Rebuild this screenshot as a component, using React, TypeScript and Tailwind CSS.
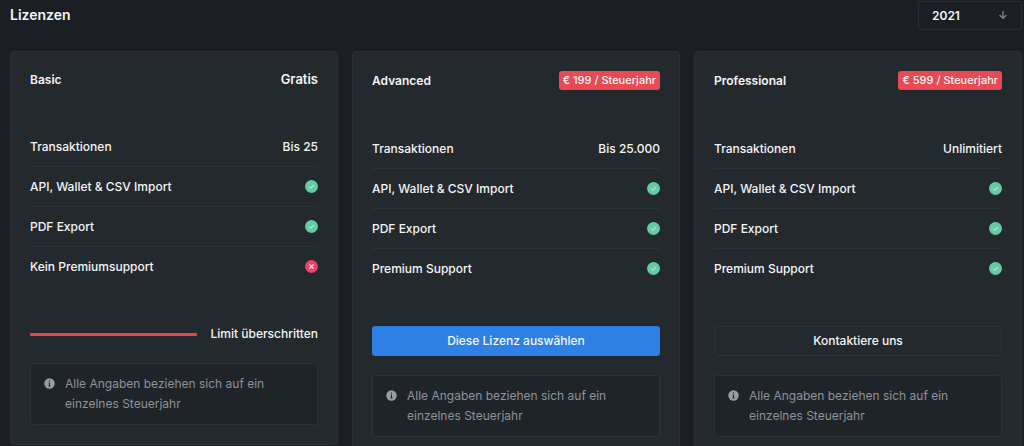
import React from "react";

type Feature = {
  label: string;
  value: string | boolean;
};

type License = {
  name: string;
  price: string;
  badge: boolean;
  action: "limit" | "select" | "contact";
  features: Feature[];
};

const licenses: License[] = [
  {
    name: "Basic",
    price: "Gratis",
    badge: false,
    action: "limit",
    features: [
      { label: "Transaktionen", value: "Bis 25" },
      { label: "API, Wallet & CSV Import", value: true },
      { label: "PDF Export", value: true },
      { label: "Kein Premiumsupport", value: false },
    ],
  },
  {
    name: "Advanced",
    price: "€ 199 / Steuerjahr",
    badge: true,
    action: "select",
    features: [
      { label: "Transaktionen", value: "Bis 25.000" },
      { label: "API, Wallet & CSV Import", value: true },
      { label: "PDF Export", value: true },
      { label: "Premium Support", value: true },
    ],
  },
  {
    name: "Professional",
    price: "€ 599 / Steuerjahr",
    badge: true,
    action: "contact",
    features: [
      { label: "Transaktionen", value: "Unlimitiert" },
      { label: "API, Wallet & CSV Import", value: true },
      { label: "PDF Export", value: true },
      { label: "Premium Support", value: true },
    ],
  },
];

const CheckIcon = () => (
  <svg viewBox="0 0 13 13" className="size-[13px]" role="img" aria-label="Enthalten">
    <circle cx="6.5" cy="6.5" r="6.5" fill="#63cba5" />
    <path d="M4.2 6.7l1.7 1.5 3-3.1" fill="none" stroke="#d5f3e7" strokeWidth="1" />
  </svg>
);

const CrossIcon = () => (
  <svg viewBox="0 0 13 13" className="size-[13px]" role="img" aria-label="Nicht enthalten">
    <circle cx="6.5" cy="6.5" r="6.5" fill="#e5446d" />
    <path d="M4.4 4.4l4.2 4.2M8.6 4.4L4.4 8.6" fill="none" stroke="#fbe3ea" strokeWidth="1.3" />
  </svg>
);

const InfoIcon = () => (
  <svg viewBox="0 0 11 11" className="mt-1 size-[11px] shrink-0" aria-hidden="true">
    <circle cx="5.5" cy="5.5" r="5.2" fill="#989da6" />
    <path d="M5.5 2.4v1.3M4.7 5h0.8v2.9M4.4 8h2.2" fill="none" stroke="#1f2428" strokeWidth="1" />
  </svg>
);

const ArrowDownIcon = () => (
  <svg
    viewBox="0 0 10 10"
    className="pointer-events-none absolute top-[9px] right-[14px] size-[10px]"
    fill="none"
    stroke="#7b8794"
    strokeWidth="1.3"
    aria-hidden="true"
  >
    <path d="M5 1v7.4M1.6 5L5 8.4 8.4 5" />
  </svg>
);

const LicenseAction = ({ action }: { action: License["action"] }) => {
  if (action === "limit") {
    return (
      <div className="flex items-center gap-[13px]">
        <div
          role="progressbar"
          aria-label="Transaktionslimit"
          aria-valuenow={100}
          className="h-[3px] flex-1 rounded-[1px] bg-[#e54850]"
        ></div>
        <span className="leading-5">Limit überschritten</span>
      </div>
    );
  }
  if (action === "select") {
    return (
      <button type="button" className="h-[30px] w-full rounded-[3px] bg-[#2f80e3]">
        Diese Lizenz auswählen
      </button>
    );
  }
  return (
    <button type="button" className="h-[30px] w-full rounded-[3px] border border-[#2d3236]">
      Kontaktiere uns
    </button>
  );
};

const LicenseCard = ({ license }: { license: License }) => {
  return (
    <section className="rounded-[4px] border border-[#2c3135] bg-[#24292d] p-[19px]">
      <div className="flex items-center justify-between">
        <h2 className="leading-[17px] font-semibold">{license.name}</h2>
        {license.badge ? (
          <span className="rounded-[3px] bg-[#e84a54] px-1 text-[11px] leading-[19px]">
            {license.price}
          </span>
        ) : (
          <span className="text-[13px] leading-[17px] font-semibold">{license.price}</span>
        )}
      </div>
      <ul className="mt-[39px] mb-[38px] divide-y divide-[#2d3236]">
        {license.features.map((feature) => (
          <li key={feature.label} className="flex items-center justify-between py-[10px] leading-[19px]">
            <span>{feature.label}</span>
            {typeof feature.value === "string" ? (
              <span>{feature.value}</span>
            ) : feature.value ? (
              <CheckIcon />
            ) : (
              <CrossIcon />
            )}
          </li>
        ))}
      </ul>
      <LicenseAction action={license.action} />
      <div className="mt-[19px] flex gap-[10px] rounded-[3px] border border-[#2c3135] bg-[#1f2428] py-[10px] pr-10 pl-[13px] font-normal text-[#8e939c]">
        <InfoIcon />
        <p className="leading-5">Alle Angaben beziehen sich auf ein einzelnes Steuerjahr</p>
      </div>
    </section>
  );
};

const App = () => {
  return (
    <main className="min-h-screen bg-[#1b1e23] pt-px pr-0.5 pl-[10px] font-['Inter',sans-serif] text-[12px] font-medium text-[#f4f5f6]">
      <header className="mb-[21px] flex items-start justify-between">
        <h1 className="text-[14px] leading-7 font-semibold">Lizenzen</h1>
        <div className="relative">
          <select
            aria-label="Steuerjahr"
            defaultValue="2021"
            className="h-[29px] w-[104px] appearance-none rounded-[3px] border border-[#2a2f34] bg-transparent pl-[13px] font-semibold"
          >
            <option>2021</option>
            <option>2020</option>
            <option>2019</option>
          </select>
          <ArrowDownIcon />
        </div>
      </header>
      <div className="grid grid-cols-3 items-start gap-[14px]">
        {licenses.map((license) => (
          <LicenseCard key={license.name} license={license} />
        ))}
      </div>
    </main>
  );
};

export default App;
